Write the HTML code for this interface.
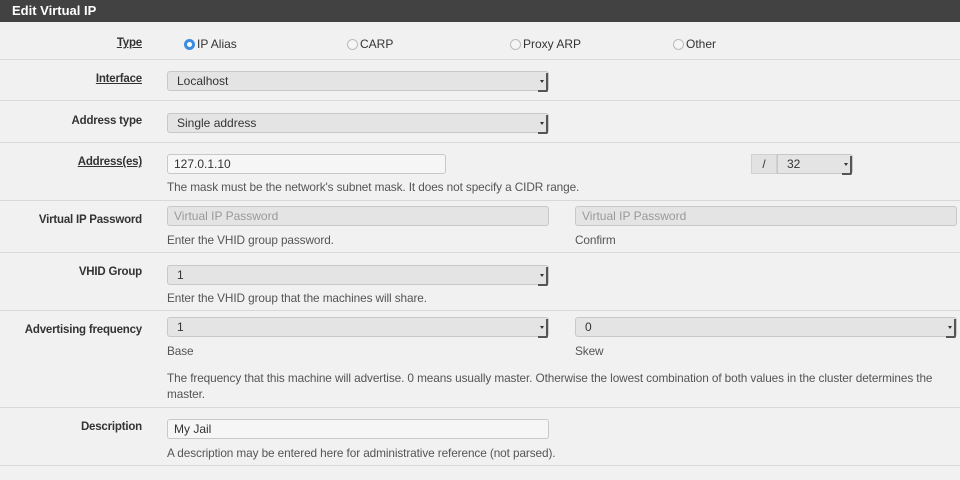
<!DOCTYPE html>
<html><head><meta charset="utf-8"><style>
*{box-sizing:border-box;margin:0;padding:0}
body{width:960px;height:480px;overflow:hidden;background:#f1f1f1;font-family:"Liberation Sans",sans-serif;font-size:12px;color:#333;position:relative}
.hdr{position:absolute;left:0;top:0;width:960px;height:22px;background:#424242;color:#fff;font-weight:bold;font-size:13px;padding:3px 0 0 12px}
.sep{position:absolute;left:0;width:960px;height:1px;background:#d8d8d8}
.lbl{position:absolute;right:818px;font-weight:bold;font-size:11.5px;letter-spacing:-0.2px;color:#333;white-space:nowrap}
.u{text-decoration:underline}
.sel{position:absolute;height:20px;background:#e4e4e4;border:1px solid #c8c8c8;border-radius:3px;padding:2px 0 0 9px;font-size:12px}
.sel:after{content:"";position:absolute;right:0;top:1px;width:8px;height:17px;border-right:2px solid #555;border-bottom:2px solid #555;border-radius:0 0 2px 0}
.sel i{position:absolute;right:4px;top:8px;border-left:2px solid transparent;border-right:2px solid transparent;border-top:3px solid #333}
.inp{position:absolute;height:20px;background:#f6f6f6;border:1px solid #c8c8c8;border-radius:3px;padding:2px 0 0 6px;font-size:12px}
.dis{background:#e4e4e4;color:#999}
.h{position:absolute;font-size:11.8px;letter-spacing:-0.1px;color:#555;white-space:nowrap}
.r{position:absolute;top:37px;font-size:12px}
.r b{display:inline-block;width:11px;height:11px;border-radius:50%;border:1px solid #bbb;background:#f5f5f5;vertical-align:-2px;margin-right:2px}
.r b.on{border:3px solid #3a8de0;background:#fff}
</style></head><body>
<div class="hdr">Edit Virtual IP</div>
<div class="lbl u" style="top:37px">Type</div>
<div class="r" style="left:184px"><b class="on"></b>IP Alias</div>
<div class="r" style="left:347px"><b></b>CARP</div>
<div class="r" style="left:510px"><b></b>Proxy ARP</div>
<div class="r" style="left:673px"><b></b>Other</div>
<div class="sep" style="top:59px"></div>
<div class="lbl u" style="top:73px">Interface</div>
<div class="sel" style="left:167px;top:71px;width:382px">Localhost<i></i></div>
<div class="sep" style="top:100px"></div>
<div class="lbl" style="top:115px">Address type</div>
<div class="sel" style="left:167px;top:113px;width:382px">Single address<i></i></div>
<div class="sep" style="top:142px"></div>
<div class="lbl u" style="top:156px">Address(es)</div>
<div class="inp" style="left:167px;top:154px;width:279px">127.0.1.10</div>
<div style="position:absolute;left:751px;top:154px;width:26px;height:20px;background:#e2e2e2;border:1px solid #d0d0d0;text-align:center;padding-top:2px">/</div>
<div class="sel" style="left:777px;top:154px;width:76px;border-radius:0 3px 3px 0">32<i></i></div>
<div class="h" style="left:167px;top:180px">The mask must be the network's subnet mask. It does not specify a CIDR range.</div>
<div class="sep" style="top:200px"></div>
<div class="lbl" style="top:214px">Virtual IP Password</div>
<div class="inp dis" style="left:167px;top:206px;width:382px">Virtual IP Password</div>
<div class="inp dis" style="left:575px;top:206px;width:382px">Virtual IP Password</div>
<div class="h" style="left:167px;top:233px">Enter the VHID group password.</div>
<div class="h" style="left:575px;top:233px">Confirm</div>
<div class="sep" style="top:252px"></div>
<div class="lbl" style="top:266px">VHID Group</div>
<div class="sel" style="left:167px;top:265px;width:382px">1<i></i></div>
<div class="h" style="left:167px;top:291px">Enter the VHID group that the machines will share.</div>
<div class="sep" style="top:310px"></div>
<div class="lbl" style="top:324px">Advertising frequency</div>
<div class="sel" style="left:167px;top:317px;width:382px">1<i></i></div>
<div class="sel" style="left:575px;top:317px;width:382px">0<i></i></div>
<div class="h" style="left:167px;top:344px">Base</div>
<div class="h" style="left:575px;top:344px">Skew</div>
<div class="h" style="left:167px;top:370px;white-space:normal;width:792px;line-height:16px">The frequency that this machine will advertise. 0 means usually master. Otherwise the lowest combination of both values in the cluster determines the master.</div>
<div class="sep" style="top:407px"></div>
<div class="lbl" style="top:421px">Description</div>
<div class="inp" style="left:167px;top:419px;width:382px">My Jail</div>
<div class="h" style="left:167px;top:446px">A description may be entered here for administrative reference (not parsed).</div>
<div class="sep" style="top:465px"></div>
</body></html>
